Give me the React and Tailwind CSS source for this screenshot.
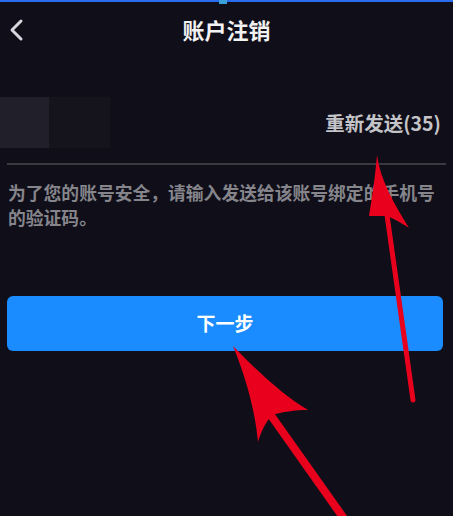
import React from 'react';

function Arrows() {
  return (
    <svg className="absolute inset-0 pointer-events-none" width="453" height="516" viewBox="0 0 453 516">
      {/* right arrow */}
      <line x1="387" y1="215" x2="413" y2="400" stroke="#e8001c" strokeWidth="5" strokeLinecap="round" />
      <path d="M377 155 C380 180 395 205 409 228 C400 222 392 218 387 216 C381 216 375 216 369 216 C372 198 375 178 377 155 Z" fill="#e8001c" />
      {/* bottom arrow */}
      <line x1="270" y1="414" x2="345" y2="520" stroke="#e8001c" strokeWidth="8" />
      <path d="M233 346 C258 372 283 395 308 410 C295 410 282 412 272 415 C265 423 261 432 258 442 C255 410 246 378 233 346 Z" fill="#e8001c" />
    </svg>
  );
}

export default function App() {
  return (
    <div
      className="relative w-[453px] h-[516px] overflow-hidden bg-[#0f0e19] text-white"
      style={{ fontFamily: '"Noto Sans CJK SC", "Liberation Sans", sans-serif' }}
    >
      <div className="h-[2px] bg-[#2a6cf0] relative">
        <div className="absolute left-[219px] top-0 w-[8px] h-[4px] bg-[#3aa0d8]" />
      </div>

      {/* header */}
      <div className="relative h-[55px] flex items-center justify-center">
        <svg className="absolute left-[8px] top-[16px]" width="16" height="24" viewBox="0 0 16 24">
          <path d="M13 3 L4 12 L13 21" fill="none" stroke="#d8d8dc" strokeWidth="3" strokeLinecap="round" strokeLinejoin="round" />
        </svg>
        <h1 className="text-[22px] font-bold text-[#f2f2f2]">账户注销</h1>
      </div>

      {/* code row */}
      <div className="mt-[40px] flex items-center h-[51px]">
        <div className="w-[49px] h-full bg-[#201f2a]" />
        <div className="w-[61px] h-full bg-[#15141d]" />
        <div className="flex-1" />
        <span className="mr-[12px] text-[19.5px] font-bold text-[#c4c4c8]">重新发送(35)</span>
      </div>

      <div className="mx-[7px] mt-[15px] h-[2px] bg-[#3a3942]" />

      <p className="mx-[8px] mt-[15px] text-[17.8px] leading-[25px] font-bold text-[#85858b]">
        为了您的账号安全，请输入发送给该账号绑定的手机号
        <br />
        的验证码。
      </p>

      <button className="mx-[7px] mt-[66px] w-[436px] h-[55px] rounded-[6px] bg-[#1a8cff] text-[19px] font-bold text-white flex items-center justify-center">
        下一步
      </button>

      <Arrows />
    </div>
  );
}
